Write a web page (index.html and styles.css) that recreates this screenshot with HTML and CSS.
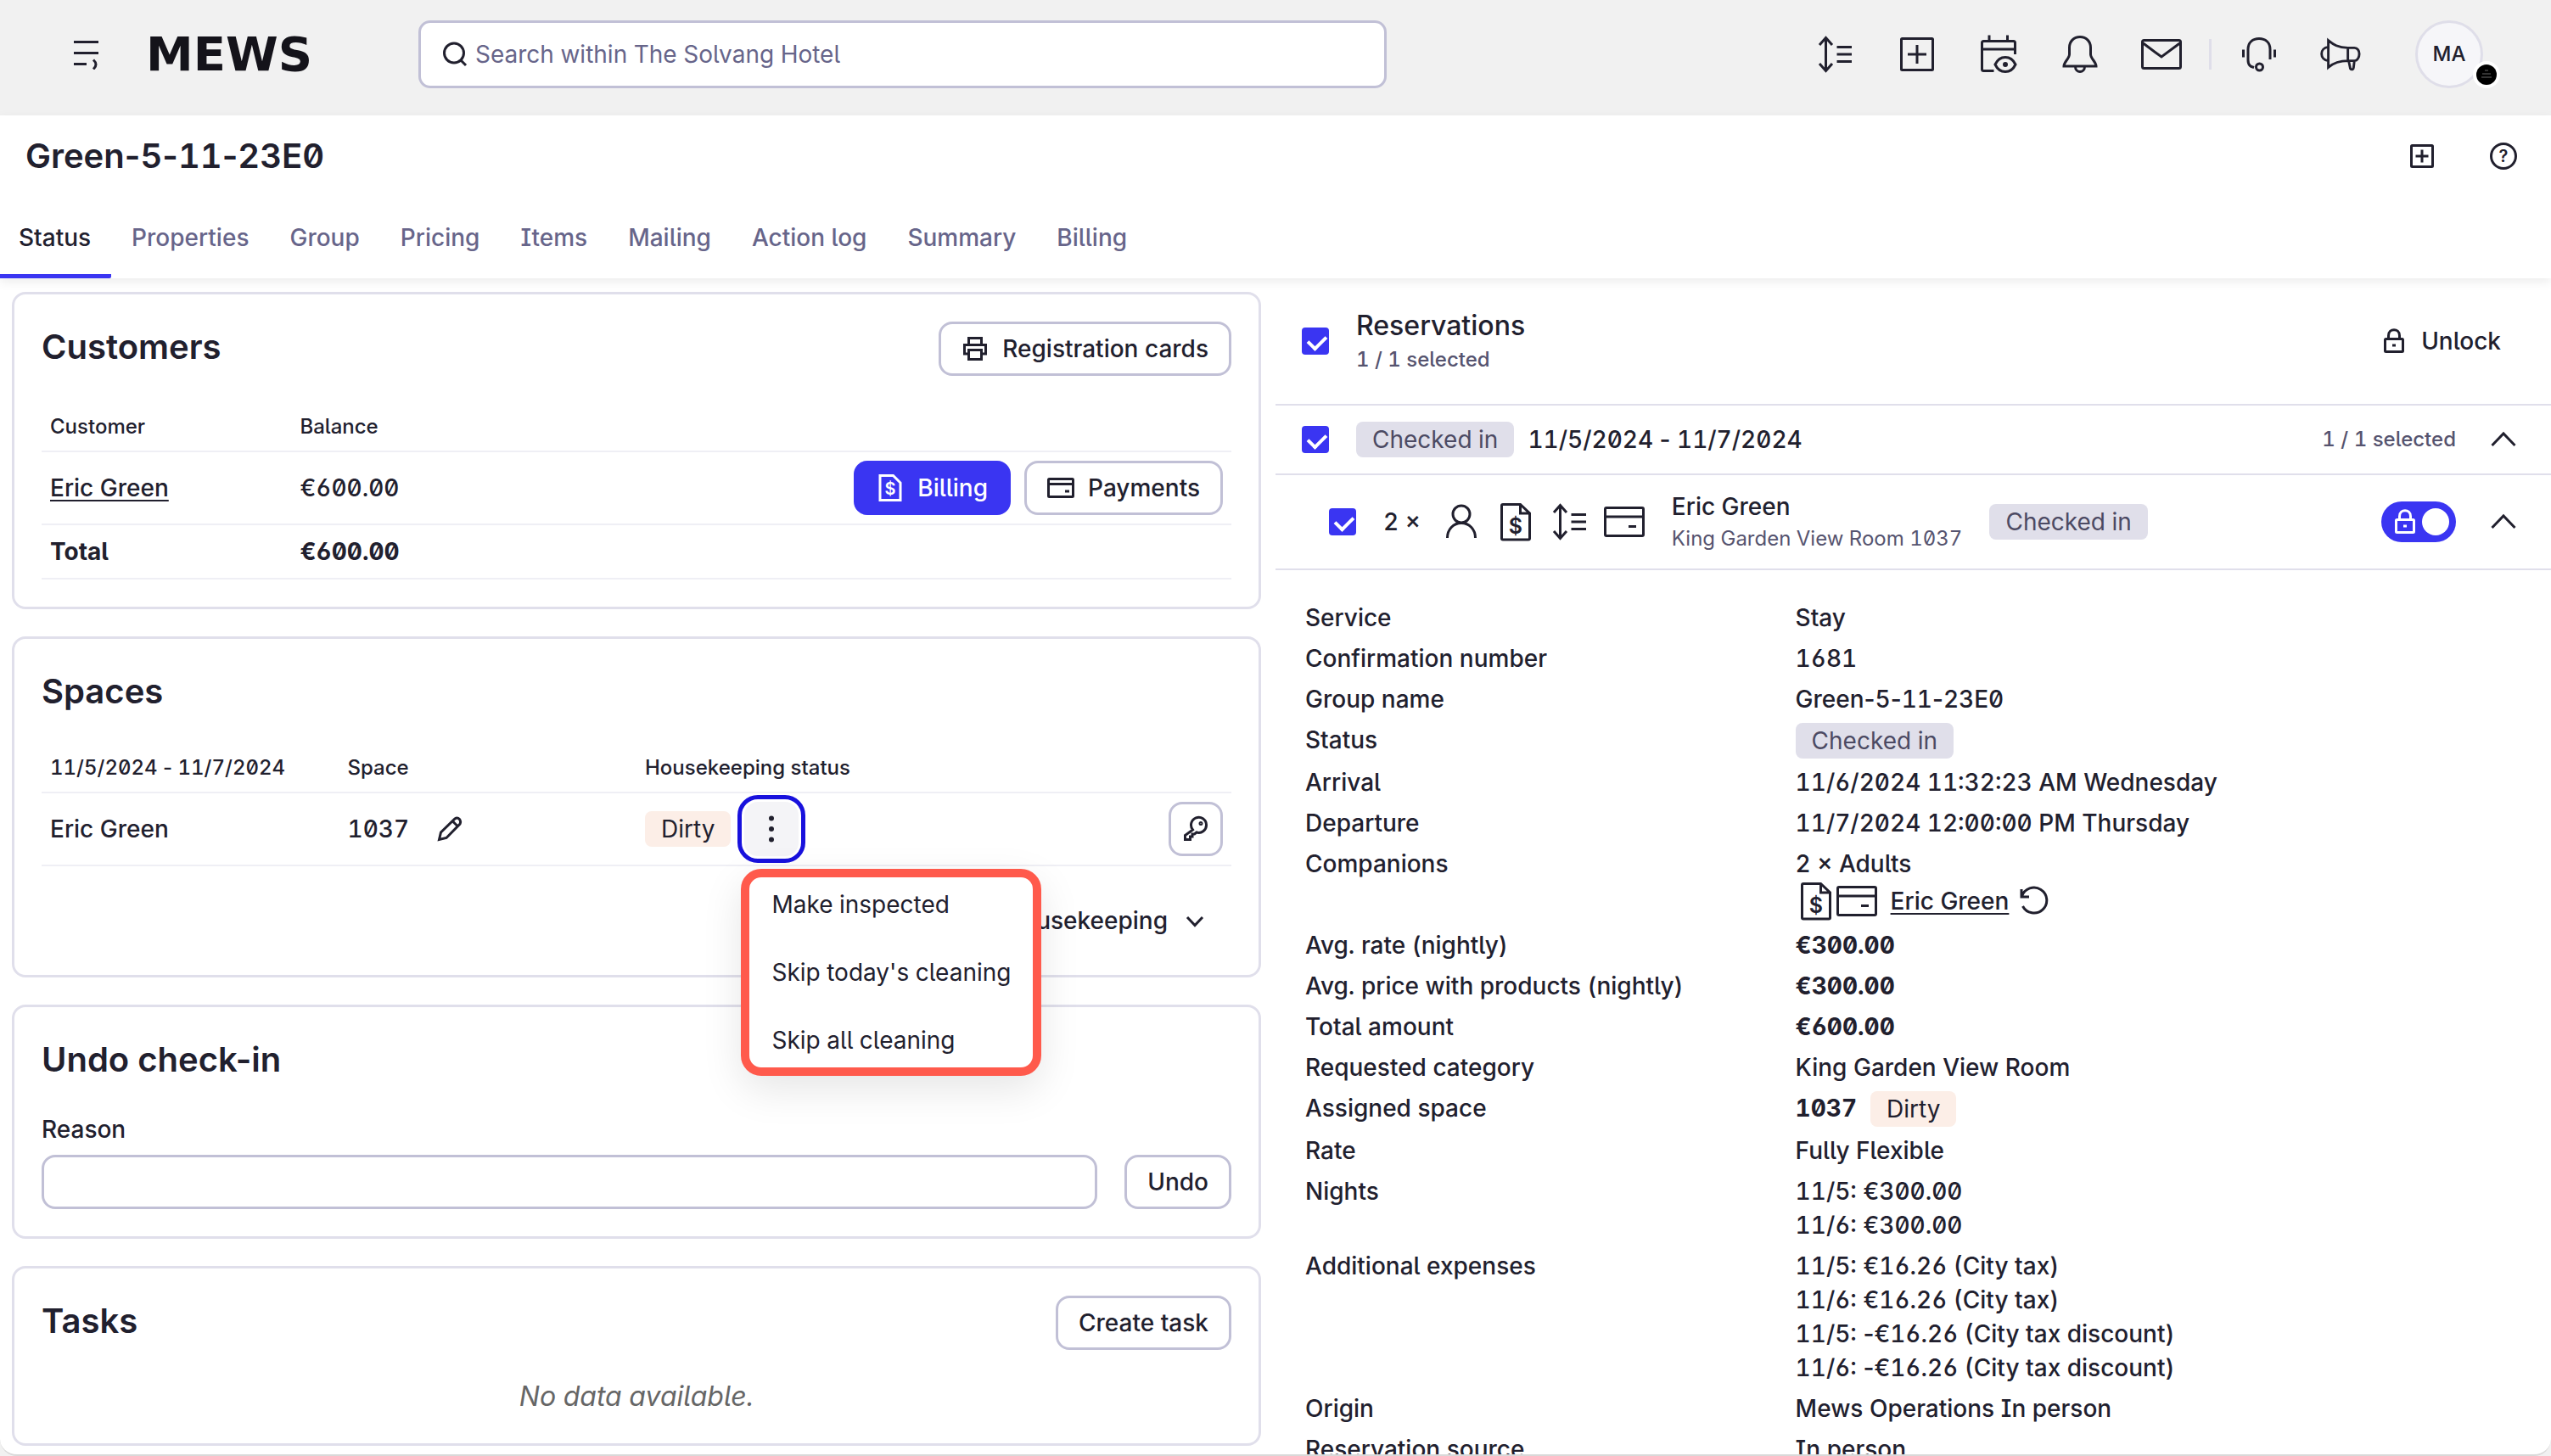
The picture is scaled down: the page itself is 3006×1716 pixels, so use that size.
FILE: index.html
```
<!DOCTYPE html>
<html lang="en">
<head>
    <meta charset="UTF-8">
    <meta name="viewport" content="width=device-width, initial-scale=1.0">
    <title>Green-5-11-23E0 - Mews</title>
    <link rel="stylesheet" href="styles.css">
</head>
<body>
    <!-- Icon sprite -->
    <svg class="sprite" aria-hidden="true">
        <symbol id="i-menu" viewBox="0 0 36 36">
            <path d="M3 3.500h29M3 16.500h29M3 29.500h15M26 24.500q6 5.500 0 11"/>
        </symbol>
        <symbol id="i-search" viewBox="0 0 32 32">
            <circle cx="15" cy="14.500" r="11.500"/>
            <path d="M23 23l6 6"/>
        </symbol>
        <symbol id="i-sort" viewBox="0 0 48 48">
            <path d="M12.500 5v38M5 13l7.500-8.500L20 13M5 35l7.500 8.500L20 35M25.500 15.500H43M25.500 24H43M25.500 32.500H43"/>
        </symbol>
        <symbol id="i-plus" viewBox="0 0 48 48">
            <rect x="5.500" y="5.500" width="37" height="37" rx="1"/>
            <path d="M24 13v22M13 24h22"/>
        </symbol>
        <symbol id="i-plus-sm" viewBox="0 0 36 36">
            <rect x="5.500" y="5.500" width="25" height="25" rx="1"/>
            <path d="M18 10.500v15M10.500 18h15"/>
        </symbol>
        <symbol id="i-calendar" viewBox="0 0 48 48">
            <path d="M18.500 43.500H6.500a2 2 0 0 1-2-2v-31a2 2 0 0 1 2-2h35a2 2 0 0 1 2 2V24M4.500 18h39M13 1.500v7M34.500 1.500v7"/>
            <path d="M20 36q4-8.500 12-8.500T44 36q-4 8.500-12 8.500T20 36z"/>
            <circle cx="32" cy="36" r="1.500"/>
        </symbol>
        <symbol id="i-bell" viewBox="0 0 48 48">
            <path d="M24 3.500c-7.500 0-12.500 5.500-12.500 12.500v8c0 5-6.500 9-6.500 14h38c0-5-6.500-9-6.500-14v-8C36.500 9 31.500 3.500 24 3.500zM18.500 38.500c0 8 11 8 11 0"/>
        </symbol>
        <symbol id="i-mail" viewBox="0 0 48 48">
            <rect x="1.500" y="7.500" width="45" height="33" rx="2"/>
            <path d="M2.500 11L24 27 45.500 11"/>
        </symbol>
        <symbol id="i-assist" viewBox="0 0 48 48">
            <path d="M18 39.500c-3-1-7-1.500-7-9V18c0-8 5.500-12.500 13-12.500S37 10 37 18v12M5.500 18.500v9M42.500 18.500v9"/>
            <circle cx="24.500" cy="39" r="4"/>
        </symbol>
        <symbol id="i-megaphone" viewBox="0 0 50 48">
            <path d="M10 7c6 5 12 9 24 9h8c4 0 6 4 6 7.500S46 32 42 32h-8c-12 0-18 3-24 8zM34 16v16M35 32l2 9.500c1.500 2 4 1 4-1L42 32M10 15c-11 1-11 16 0 17"/>
        </symbol>
        <symbol id="i-help" viewBox="0 0 36 36">
            <circle cx="18" cy="18" r="14.500"/>
            <text class="icon-text" x="18" y="25" font-size="20">?</text>
        </symbol>
        <symbol id="i-print" viewBox="0 0 32 32">
            <path d="M8.500 12V3.500h15V12M8.500 22H3.500V11.500h25V22h-5"/>
            <rect x="8.500" y="17.500" width="15" height="11"/>
        </symbol>
        <symbol id="i-bill" viewBox="0 0 32 32">
            <path d="M4 1.500h15.500L28 10v20.500H4z"/>
            <text class="icon-text" x="16" y="24" font-size="20">$</text>
        </symbol>
        <symbol id="i-card" viewBox="0 0 32 32">
            <rect x="1.500" y="5.500" width="29" height="21" rx="1"/>
            <path d="M2 11.500h28M21 20h5"/>
        </symbol>
        <symbol id="i-pencil" viewBox="0 0 32 32">
            <path d="M3.500 28.500l2-8.500L22 4c4-3 8 2 6 6L12 26.500zM19.500 7l6 6"/>
        </symbol>
        <symbol id="i-more" viewBox="0 0 32 32">
            <g fill="currentColor" stroke="none">
                <circle cx="16" cy="3.500" r="3"/>
                <circle cx="16" cy="16" r="3"/>
                <circle cx="16" cy="28.500" r="3"/>
            </g>
        </symbol>
        <symbol id="i-key" viewBox="0 0 32 32">
            <path d="M12.500 17A9 9 0 1 1 17 20l-2.500 2H12v3H9.500v3.500h-6v-5z"/>
            <circle cx="22" cy="9.500" r="1"/>
        </symbol>
        <symbol id="i-down" viewBox="0 0 32 32">
            <path d="M7 12l9 9.500L25 12"/>
        </symbol>
        <symbol id="i-up" viewBox="0 0 32 32">
            <path d="M2.500 23L16 9l13.500 14"/>
        </symbol>
        <symbol id="i-lock" viewBox="0 0 32 32">
            <rect x="5.500" y="13.500" width="21" height="15" rx="1"/>
            <path d="M9.500 13V9.500c0-9 13-9 13 0V13M14 21h4"/>
        </symbol>
        <symbol id="i-person" viewBox="0 0 48 48">
            <circle cx="24" cy="15" r="10"/>
            <path d="M7.500 43c0-10 7-17.500 16.500-17.500S40.500 33 40.500 43"/>
        </symbol>
        <symbol id="i-doc" viewBox="0 0 48 48">
            <path d="M9 3.500h20.500L40.500 14v29.500a1.500 1.500 0 0 1-1.500 1.500H9a1.500 1.500 0 0 1-1.500-1.500V5A1.500 1.500 0 0 1 9 3.500zM29.500 3.500V14h11"/>
            <text class="icon-text" x="24" y="38" font-size="25">$</text>
        </symbol>
        <symbol id="i-card-lg" viewBox="0 0 48 48">
            <rect x="1.500" y="7.500" width="45" height="33" rx="1.500"/>
            <path d="M2 18h44M29 29.500h9"/>
        </symbol>
        <symbol id="i-undo" viewBox="0 0 36 36">
            <path d="M3 4v9h9M3.500 12.500A15 15 0 1 1 4.500 24"/>
        </symbol>
    </svg>

    <div class="app">
        <header class="topbar">
            <button class="icon-btn menu-btn" aria-label="Menu"><svg class="icon-md"><use href="#i-menu"/></svg></button>
            <a class="logo" href="#">MEWS</a>
            <label class="search">
                <svg class="icon-sm"><use href="#i-search"/></svg>
                <input type="search" placeholder="Search within The Solvang Hotel" aria-label="Search">
            </label>
            <div class="topbar-actions">
                <button class="icon-btn" aria-label="Timeline"><svg class="icon-lg"><use href="#i-sort"/></svg></button>
                <button class="icon-btn" aria-label="New"><svg class="icon-lg"><use href="#i-plus"/></svg></button>
                <button class="icon-btn" aria-label="Calendar"><svg class="icon-lg"><use href="#i-calendar"/></svg></button>
                <button class="icon-btn" aria-label="Notifications"><svg class="icon-lg"><use href="#i-bell"/></svg></button>
                <button class="icon-btn" aria-label="Messages"><svg class="icon-lg"><use href="#i-mail"/></svg></button>
            </div>
            <div class="divider"></div>
            <div class="topbar-actions">
                <button class="icon-btn" aria-label="Support"><svg class="icon-lg"><use href="#i-assist"/></svg></button>
                <button class="icon-btn" aria-label="News"><svg class="icon-lg"><use href="#i-megaphone"/></svg></button>
            </div>
            <button class="avatar">MA
                <svg class="avatar-badge" viewBox="0 0 32 32">
                    <circle cx="16" cy="16" r="16" fill="#fff"/>
                    <circle cx="16" cy="16" r="12" fill="#000"/>
                    <path d="M14 11h4M11 15h10M10 19h12" stroke="#666" stroke-width="1"/>
                </svg>
            </button>
        </header>

        <div class="page-head">
            <div class="title-row">
                <h1>Green<span class="dash">-</span>5<span class="dash">-</span>11<span class="dash">-</span>23E0</h1>
                <button class="icon-btn" aria-label="Add"><svg class="icon-md"><use href="#i-plus-sm"/></svg></button>
                <button class="icon-btn" aria-label="Help"><svg class="icon-md"><use href="#i-help"/></svg></button>
            </div>
            <nav class="tabs">
                <a class="active" href="#">Status</a>
                <a href="#">Properties</a>
                <a href="#">Group</a>
                <a href="#">Pricing</a>
                <a href="#">Items</a>
                <a href="#">Mailing</a>
                <a href="#">Action log</a>
                <a href="#">Summary</a>
                <a href="#">Billing</a>
            </nav>
        </div>

        <main class="columns">
            <div class="cards">
                <section class="card">
                    <div class="card-head">
                        <h2>Customers</h2>
                        <button class="btn"><svg class="icon-sm"><use href="#i-print"/></svg>Registration cards</button>
                    </div>
                    <table class="customers">
                        <thead>
                            <tr><th>Customer</th><th>Balance</th><th></th></tr>
                        </thead>
                        <tbody>
                            <tr>
                                <td><a class="link" href="#">Eric Green</a></td>
                                <td>€600.00</td>
                                <td>
                                    <div class="row-actions">
                                        <button class="btn btn-primary"><svg class="icon-sm"><use href="#i-bill"/></svg>Billing</button>
                                        <button class="btn"><svg class="icon-sm"><use href="#i-card"/></svg>Payments</button>
                                    </div>
                                </td>
                            </tr>
                            <tr class="total"><td>Total</td><td>€600.00</td><td></td></tr>
                        </tbody>
                    </table>
                </section>

                <section class="card">
                    <div class="card-head"><h2>Spaces</h2></div>
                    <table class="spaces">
                        <thead>
                            <tr><th>11/5/2024<span class="dash"> - </span>11/7/2024</th><th>Space</th><th>Housekeeping status</th><th></th></tr>
                        </thead>
                        <tbody>
                            <tr>
                                <td>Eric Green</td>
                                <td>
                                    <div class="space-cell">1037
                                        <button class="icon-btn" aria-label="Edit space"><svg class="icon-sm"><use href="#i-pencil"/></svg></button>
                                    </div>
                                </td>
                                <td>
                                    <div class="status-cell">
                                        <span class="tag tag-dirty">Dirty</span>
                                        <div class="dropdown">
                                            <button class="btn btn-icon btn-focused" aria-label="More"><svg class="icon-sm"><use href="#i-more"/></svg></button>
                                            <div class="menu">
                                                <button>Make inspected</button>
                                                <button>Skip today's cleaning</button>
                                                <button>Skip all cleaning</button>
                                            </div>
                                        </div>
                                    </div>
                                </td>
                                <td>
                                    <div class="row-actions">
                                        <button class="btn btn-icon" aria-label="Cut key"><svg class="icon-sm"><use href="#i-key"/></svg></button>
                                    </div>
                                </td>
                            </tr>
                        </tbody>
                    </table>
                    <div class="card-foot">
                        <button class="btn btn-plain">Housekeeping<svg class="icon-sm"><use href="#i-down"/></svg></button>
                    </div>
                </section>

                <section class="card">
                    <div class="card-head"><h2>Undo check-in</h2></div>
                    <label class="field-label" for="reason">Reason</label>
                    <div class="field-row">
                        <input class="field" id="reason" type="text">
                        <button class="btn">Undo</button>
                    </div>
                </section>

                <section class="card">
                    <div class="card-head">
                        <h2>Tasks</h2>
                        <button class="btn">Create task</button>
                    </div>
                    <p class="empty">No data available.</p>
                </section>
            </div>

            <section class="reservations">
                <div class="res-row res-head">
                    <input class="check" type="checkbox" id="all" checked>
                    <label class="res-title" for="all">Reservations<small>1 / 1 selected</small></label>
                    <button class="btn btn-plain push"><svg class="icon-sm"><use href="#i-lock"/></svg>Unlock</button>
                </div>
                <div class="res-row res-group">
                    <input class="check" type="checkbox" id="group" checked>
                    <label class="group-label" for="group"><span class="tag">Checked in</span><span>11/5/2024<span class="dash"> - </span>11/7/2024</span></label>
                    <small class="push">1 / 1 selected</small>
                    <button class="icon-btn" aria-label="Collapse group"><svg class="icon-sm"><use href="#i-up"/></svg></button>
                </div>
                <div class="res-row res-item">
                    <input class="check" type="checkbox" id="item" checked>
                    <span class="count">2 ×</span>
                    <div class="item-icons">
                        <svg class="icon-lg"><use href="#i-person"/></svg>
                        <svg class="icon-lg"><use href="#i-doc"/></svg>
                        <svg class="icon-lg"><use href="#i-sort"/></svg>
                        <svg class="icon-lg"><use href="#i-card-lg"/></svg>
                    </div>
                    <label class="item-name" for="item">Eric Green<small>King Garden View Room 1037</small></label>
                    <span class="tag">Checked in</span>
                    <label class="switch push">
                        <input type="checkbox" aria-label="Locked" checked>
                        <svg class="icon-sm"><use href="#i-lock"/></svg>
                    </label>
                    <button class="icon-btn" aria-label="Collapse reservation"><svg class="icon-sm"><use href="#i-up"/></svg></button>
                </div>

                <dl class="details">
                    <dt>Service</dt><dd>Stay</dd>
                    <dt>Confirmation number</dt><dd>1681</dd>
                    <dt>Group name</dt><dd>Green<span class="dash">-</span>5<span class="dash">-</span>11<span class="dash">-</span>23E0</dd>
                    <dt>Status</dt><dd><span class="tag">Checked in</span></dd>
                    <dt>Arrival</dt><dd>11/6/2024 11:32:23 AM Wednesday</dd>
                    <dt>Departure</dt><dd>11/7/2024 12:00:00 PM Thursday</dd>
                    <dt>Companions</dt>
                    <dd>2 × Adults
                        <div class="companion">
                            <svg class="icon-lg"><use href="#i-doc"/></svg>
                            <svg class="icon-lg"><use href="#i-card-lg"/></svg>
                            <a class="link" href="#">Eric Green</a>
                            <button class="icon-btn" aria-label="Undo"><svg class="icon-md"><use href="#i-undo"/></svg></button>
                        </div>
                    </dd>
                    <dt>Avg. rate (nightly)</dt><dd><b>€300.00</b></dd>
                    <dt>Avg. price with products (nightly)</dt><dd><b>€300.00</b></dd>
                    <dt>Total amount</dt><dd><b>€600.00</b></dd>
                    <dt>Requested category</dt><dd>King Garden View Room</dd>
                    <dt>Assigned space</dt><dd class="assigned"><b>1037</b><span class="tag tag-dirty">Dirty</span></dd>
                    <dt>Rate</dt><dd>Fully Flexible</dd>
                    <dt>Nights</dt><dd>11/5: €300.00<br>11/6: €300.00</dd>
                    <dt>Additional expenses</dt>
                    <dd>11/5: €16.26 (City tax)<br>11/6: €16.26 (City tax)<br>11/5: <span class="dash">-</span>€16.26 (City tax discount)<br>11/6: <span class="dash">-</span>€16.26 (City tax discount)</dd>
                    <dt>Origin</dt><dd>Mews Operations In person</dd>
                    <dt>Reservation source</dt><dd>In person</dd>
                </dl>
            </section>
        </main>
    </div>
</body>
</html>
```
FILE: styles.css
```
* {
    margin: 0;
    padding: 0;
    box-sizing: border-box;
}

body {
    font-family: Inter, 'Liberation Sans', sans-serif;
    font-size: 28px;
    line-height: 40px;
    font-weight: 500;
    font-feature-settings: 'tnum', 'ss02', 'zero', 'cv03';
    color: #21202e;
    background: #f1f1f1;
}

button,
input {
    font: inherit;
    font-feature-settings: inherit;
    color: inherit;
    background: none;
    border: none;
}

button {
    cursor: pointer;
}

svg {
    display: block;
    flex: none;
    fill: none;
    stroke: currentColor;
    stroke-width: 3px;
}

small {
    font-size: 24px;
    line-height: 36px;
    color: #56546f;
}

.sprite {
    display: none;
}

.icon-text {
    fill: currentColor;
    stroke: none;
    text-anchor: middle;
    font-weight: 600;
}

.icon-sm {
    width: 32px;
    height: 32px;
}

.icon-md {
    width: 36px;
    height: 36px;
}

.icon-lg {
    width: 48px;
    height: 48px;
}

.icon-btn {
    display: flex;
    flex: none;
}

.push {
    margin-left: auto;
}

/* digits are tabular, dashes between them are not */
.dash,
h2 {
    font-feature-settings: 'ss02', 'zero', 'cv03';
}

.link {
    color: inherit;
    text-underline-offset: 4px;
    text-decoration-thickness: 2px;
}

.app {
    display: flex;
    flex-direction: column;
    height: 100vh;
    overflow: hidden;
    background: #fff;
    border-bottom: 2px solid #d9d9d9;
    border-radius: 0 0 20px 20px;
}

/* Top bar */
.topbar {
    display: flex;
    align-items: center;
    flex: none;
    height: 136px;
    padding: 0 80px 8px 84px;
    background: #f1f1f1;
}

.logo {
    flex: none;
    width: 321px;
    margin-left: 52px;
    font-family: 'DejaVu Sans', sans-serif;
    font-size: 56px;
    font-weight: 700;
    color: #14131a;
    text-decoration: none;
}

.search {
    display: flex;
    align-items: center;
    flex: none;
    gap: 8px;
    width: 38%;
    height: 80px;
    padding: 0 24px;
    background: #fff;
    border: 3px solid #c1c0d6;
    border-radius: 14px;
}

.topbar .search {
    width: calc((100vw - 4px) * 0.38);
}

.search input {
    flex: 1;
    outline: none;
    font-weight: 400;
}

.search input::placeholder {
    color: #67658a;
    opacity: 1;
}

.topbar-actions {
    display: flex;
    gap: 48px;
}

.search + .topbar-actions {
    margin-left: auto;
}

.divider {
    width: 3px;
    height: 36px;
    margin: 0 32px;
    background: #dfdee9;
}

.avatar {
    position: relative;
    width: 80px;
    height: 80px;
    margin-left: 64px;
    background: #f6f6f9;
    border: 3px solid #dfdee9;
    border-radius: 50%;
    font-size: 24px;
}

.avatar-badge {
    position: absolute;
    right: -23px;
    bottom: -3px;
    width: 32px;
    height: 32px;
    stroke: none;
}

/* Title and tabs */
.page-head {
    position: relative;
    flex: none;
    background: #fff;
    box-shadow: 0 4px 12px rgba(0, 0, 0, 0.08);
}

.title-row {
    display: flex;
    align-items: center;
    gap: 60px;
    height: 96px;
    padding: 0 38px 0 30px;
}

h1,
h2 {
    font-size: 40px;
    line-height: 60px;
    font-weight: 600;
}

h1 {
    flex: 1;
}

.tabs {
    display: flex;
    height: 96px;
}

.tabs a {
    display: flex;
    align-items: center;
    padding: 4px 24px 0;
    border-bottom: 5px solid transparent;
    border-radius: 0 2px 2px 0;
    color: #67658a;
    text-decoration: none;
}

.tabs .active {
    padding-left: 22px;
    color: #21202e;
    border-bottom-color: #3a35f2;
}

/* Layout */
.columns {
    display: grid;
    grid-template-columns: 1fr 1fr;
    flex: 1;
    min-height: 0;
}

.cards {
    display: flex;
    flex-direction: column;
    gap: 32px;
    padding: 16px 17px 16px 14px;
}

.card {
    padding: 32px;
    border: 3px solid #e0dfeb;
    border-radius: 16px;
}

.card-head {
    display: flex;
    justify-content: space-between;
    margin-bottom: 32px;
}

.card-foot {
    display: flex;
    justify-content: flex-end;
    margin-top: 32px;
}

/* Buttons */
.btn {
    display: flex;
    align-items: center;
    justify-content: center;
    gap: 16px;
    height: 64px;
    padding: 0 24px;
    border: 3px solid #c1c0d6;
    border-radius: 16px;
    white-space: nowrap;
}

.btn-primary {
    color: #fff;
    background: #3a35f2;
    border-color: #3a35f2;
}

.btn-plain {
    border-color: transparent;
}

.btn-icon {
    width: 64px;
    padding: 0;
}

.btn-focused {
    background: #f4f4f7;
    border-color: #f4f4f7;
    outline: 5px solid #1811dd;
    outline-offset: 3px;
}

.row-actions {
    display: flex;
    justify-content: flex-end;
    gap: 16px;
}

/* Tables */
table {
    width: 100%;
    table-layout: fixed;
    border-spacing: 0;
}

th,
td {
    padding: 10px;
    border-bottom: 2px solid #efeff5;
    text-align: left;
}

th {
    height: 58px;
    font-size: 24px;
    line-height: 36px;
    font-weight: 500;
}

td {
    height: 64px;
}

.customers th:nth-child(-n+2) {
    width: 21%;
}

.spaces th:nth-child(-n+3) {
    width: 25%;
}

.total td {
    font-weight: 700;
}

.space-cell {
    display: flex;
    align-items: center;
    gap: 32px;
}

.status-cell {
    display: flex;
    align-items: center;
    gap: 16px;
}

.tag {
    flex: none;
    display: inline-block;
    height: 42px;
    padding: 0 19px;
    background: #e0dfea;
    border-radius: 8px;
    color: #4c4a63;
    font-weight: 400;
    line-height: 42px;
}

.tag-dirty {
    background: #fceee7;
    color: #21202e;
}

/* Housekeeping menu */
.dropdown {
    position: relative;
}

.menu {
    position: absolute;
    top: 79px;
    left: -4px;
    z-index: 10;
    display: flex;
    flex-direction: column;
    gap: 16px;
    background: #fff;
    border: 10px solid #ff5a4c;
    border-radius: 24px;
    box-shadow: 0 16px 48px rgba(0, 0, 0, 0.1);
}

.menu button {
    height: 64px;
    padding: 0 26px;
    font-weight: 400;
    text-align: left;
    white-space: nowrap;
}

/* Undo check-in */
.field-label {
    display: block;
    margin-bottom: 10px;
}

.field-row {
    display: flex;
    gap: 32px;
}

.field {
    flex: 1;
    height: 64px;
    padding: 0 24px;
    border: 3px solid #c1c0d6;
    border-radius: 16px;
}

.empty {
    font-size: 32px;
    line-height: 46px;
    font-weight: 400;
    font-style: italic;
    text-align: center;
    color: #666;
}

/* Reservations */
.res-row {
    display: flex;
    align-items: center;
    gap: 32px;
    padding: 0 40px 0 31px;
    border-bottom: 2px solid #e0dfeb;
}

.res-head {
    height: 150px;
    padding-right: 32px;
}

.res-group {
    height: 82px;
}

.res-item {
    height: 112px;
    padding-left: 63px;
}

.res-row small + .icon-btn,
.res-row .switch + .icon-btn {
    margin-left: 8px;
}

.check {
    position: relative;
    flex: none;
    width: 32px;
    height: 32px;
    appearance: none;
    border-radius: 4px;
    background: #3a35f2;
}

.check::after {
    content: '';
    position: absolute;
    top: 5px;
    left: 11px;
    width: 10px;
    height: 17px;
    border: solid #fff;
    border-width: 0 4px 4px 0;
    transform: rotate(45deg);
}

.res-title {
    display: flex;
    flex-direction: column;
    font-size: 32px;
    line-height: 44px;
}

.group-label {
    display: flex;
    align-items: center;
    gap: 16px;
}

.item-icons {
    display: flex;
    gap: 16px;
    margin-left: -8px;
}

.item-name {
    display: flex;
    flex-direction: column;
}

.item-name small {
    font-weight: 400;
}

.switch {
    position: relative;
    width: 88px;
    height: 48px;
    padding: 8px 12px;
    color: #fff;
}

.switch input {
    position: absolute;
    inset: 0;
    appearance: none;
    background: #3a35f2;
    border-radius: 24px;
}

.switch input::after {
    content: '';
    position: absolute;
    top: 8px;
    right: 8px;
    width: 32px;
    height: 32px;
    border-radius: 50%;
    background: #fff;
}

.switch svg {
    position: relative;
}

.details {
    display: grid;
    grid-template-columns: 40% 1fr;
    row-gap: 8px;
    padding: 36px 24px 0 35px;
}

.companion {
    display: flex;
    align-items: center;
    height: 48px;
}

.companion .link {
    margin: 0 12px 0 16px;
}

.details .tag {
    display: block;
    width: fit-content;
}

.assigned {
    display: flex;
    gap: 16px;
}
```
